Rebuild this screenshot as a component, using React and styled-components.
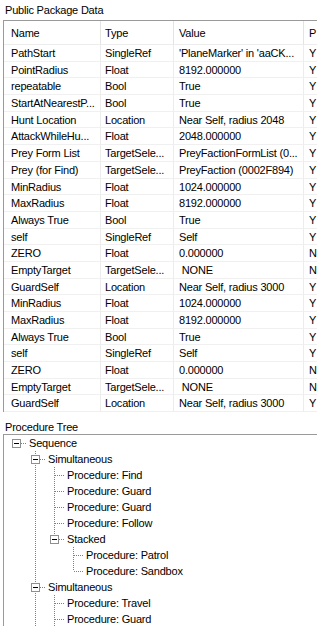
import styled, { createGlobalStyle } from "styled-components";

const GlobalStyle = createGlobalStyle`
  html, body {
    margin: 0;
    padding: 0;
    background: #ffffff;
  }
  body {
    font-family: "Liberation Sans", Arial, sans-serif;
    font-size: 11px;
    letter-spacing: -0.2px;
    color: #000;
    overflow: hidden;
  }
`;

const ROW_H = 16.7;
const TREE_ROW = 16;
const INDENT = 19;

const Page = styled.div`
  width: 317px;
  height: 626px;
  overflow: hidden;
  display: flex;
  flex-direction: column;
`;

const SectionLabel = styled.div`
  height: ${({ h }) => h}px;
  padding-top: ${({ top }) => top || 0}px;
  line-height: ${({ lh }) => lh}px;
  padding-left: 5px;
  box-sizing: content-box;
  white-space: nowrap;
`;

const ListBox = styled.div`
  margin-left: 3px;
  border-top: 1px solid #9a9a9a;
  border-left: 1px solid #9a9a9a;
  width: 340px;
`;

const Grid = styled.div`
  display: grid;
  grid-template-columns: 97px 73px 130px 40px;
`;

const HeadCell = styled.div`
  height: 24px;
  line-height: 24px;
  padding-left: ${({ pad }) => pad}px;
  border-right: 1px solid #e3e3e3;
  border-bottom: 1px solid #ededed;
  box-sizing: border-box;
  white-space: nowrap;
  overflow: hidden;
`;

const Cell = styled.div`
  height: ${ROW_H}px;
  line-height: ${ROW_H}px;
  padding-left: ${({ pad }) => pad}px;
  border-right: 1px solid #ececec;
  border-bottom: 1px solid #f0f0f0;
  box-sizing: border-box;
  white-space: pre;
  overflow: hidden;
`;

const TreeBox = styled.div`
  flex: 1;
  margin-left: 3px;
  border-top: 1px solid #9a9a9a;
  border-left: 1px solid #9a9a9a;
  padding-left: 3px;
  overflow: hidden;
`;

const TreeRow = styled.div`
  display: flex;
  align-items: center;
  height: ${TREE_ROW}px;
  white-space: nowrap;
`;

const Guide = styled.span`
  flex: none;
  width: ${INDENT}px;
  height: ${TREE_ROW}px;
  display: block;
`;

const TreeLabel = styled.span`
  margin-left: 3px;
  line-height: ${TREE_ROW}px;
`;

const columns = [
  { title: "Name", pad: 7 },
  { title: "Type", pad: 4 },
  { title: "Value", pad: 5 },
  { title: "P", pad: 5 },
];

const rows = [
  ["PathStart", "SingleRef", "'PlaneMarker' in 'aaCK...", "Y"],
  ["PointRadius", "Float", "8192.000000", "Y"],
  ["repeatable", "Bool", "True", "Y"],
  ["StartAtNearestP...", "Bool", "True", "Y"],
  ["Hunt Location", "Location", "Near Self, radius 2048", "Y"],
  ["AttackWhileHu...", "Float", "2048.000000", "Y"],
  ["Prey Form List", "TargetSele...", "PreyFactionFormList (0...", "Y"],
  ["Prey (for Find)", "TargetSele...", "PreyFaction (0002F894)", "Y"],
  ["MinRadius", "Float", "1024.000000", "Y"],
  ["MaxRadius", "Float", "8192.000000", "Y"],
  ["Always True", "Bool", "True", "Y"],
  ["self", "SingleRef", "Self", "Y"],
  ["ZERO", "Float", "0.000000", "N"],
  ["EmptyTarget", "TargetSele...", " NONE", "N"],
  ["GuardSelf", "Location", "Near Self, radius 3000", "Y"],
  ["MinRadius", "Float", "1024.000000", "Y"],
  ["MaxRadius", "Float", "8192.000000", "Y"],
  ["Always True", "Bool", "True", "Y"],
  ["self", "SingleRef", "Self", "Y"],
  ["ZERO", "Float", "0.000000", "N"],
  ["EmptyTarget", "TargetSele...", " NONE", "N"],
  ["GuardSelf", "Location", "Near Self, radius 3000", "Y"],
];

const tree = {
  label: "Sequence",
  children: [
    {
      label: "Simultaneous",
      children: [
        { label: "Procedure: Find" },
        { label: "Procedure: Guard" },
        { label: "Procedure: Guard" },
        { label: "Procedure: Follow" },
        {
          label: "Stacked",
          children: [{ label: "Procedure: Patrol" }, { label: "Procedure: Sandbox" }],
        },
      ],
    },
    {
      label: "Simultaneous",
      children: [
        { label: "Procedure: Travel" },
        { label: "Procedure: Guard" },
        { label: "Procedure: Guard" },
      ],
    },
    { label: "Procedure: Wait" },
  ],
};

// flatten the tree into rows, remembering which ancestor columns keep a line
function flatten(node, depth, isFirstRoot, hasNext, trail, out) {
  out.push({ label: node.label, depth, trail, hasNext, hasKids: !!node.children, root: isFirstRoot });
  (node.children || []).forEach((c, i, arr) => {
    flatten(c, depth + 1, false, i < arr.length - 1, [...trail, hasNext], out);
  });
  return out;
}

const DOT = "#808080";

function VLine() {
  return (
    <svg width={INDENT} height={TREE_ROW} shapeRendering="crispEdges">
      <line x1="9.5" y1="0" x2="9.5" y2={TREE_ROW} stroke={DOT} strokeDasharray="1 1" />
    </svg>
  );
}

function Connector({ up, down, box }) {
  return (
    <svg width={INDENT} height={TREE_ROW} shapeRendering="crispEdges">
      {up && <line x1="9.5" y1="0" x2="9.5" y2="8" stroke={DOT} strokeDasharray="1 1" />}
      {down && <line x1="9.5" y1="8" x2="9.5" y2={TREE_ROW} stroke={DOT} strokeDasharray="1 1" />}
      <line x1="10" y1="8.5" x2={INDENT} y2="8.5" stroke={DOT} strokeDasharray="1 1" />
      {box && (
        <g>
          <rect x="5.5" y="4.5" width="8" height="8" fill="#fff" stroke="#8e8f8f" />
          <line x1="7" y1="8.5" x2="12" y2="8.5" stroke="#000" />
        </g>
      )}
    </svg>
  );
}

export default function App() {
  const treeRows = flatten(tree, 0, true, false, [], []);

  return (
    <>
      <GlobalStyle />
      <Page>
        <SectionLabel h={20} lh={20}>Public Package Data</SectionLabel>
        <ListBox>
          <Grid>
            {columns.map((c) => (
              <HeadCell key={c.title} pad={c.pad}>{c.title}</HeadCell>
            ))}
            {rows.map((r, i) =>
              r.map((v, j) => (
                <Cell key={`${i}-${j}`} pad={columns[j].pad}>{v}</Cell>
              ))
            )}
          </Grid>
        </ListBox>
        <SectionLabel h={14} lh={14} top={8}>Procedure Tree</SectionLabel>
        <TreeBox>
          {treeRows.map((r, i) => (
            <TreeRow key={i}>
              {r.trail.map((line, k) => (
                <Guide key={k}>{line && <VLine />}</Guide>
              ))}
              <Guide>
                <Connector up={!r.root} down={r.hasNext} box={r.hasKids} />
              </Guide>
              <TreeLabel>{r.label}</TreeLabel>
            </TreeRow>
          ))}
        </TreeBox>
      </Page>
    </>
  );
}
